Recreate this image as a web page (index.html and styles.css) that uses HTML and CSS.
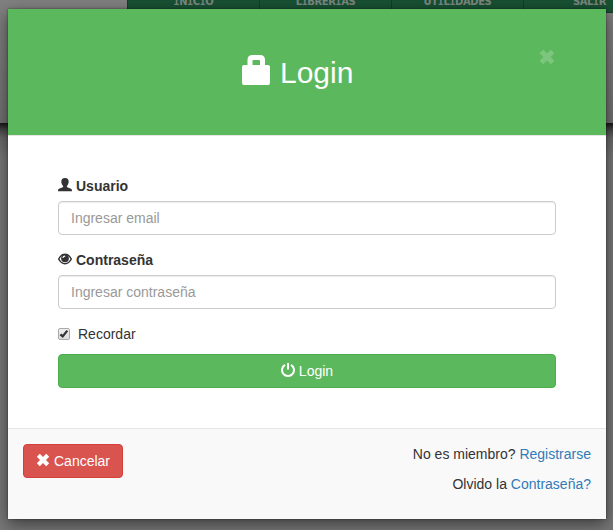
FILE: index.html
```html
<!DOCTYPE html>
<html lang="es">
<head>
<meta charset="utf-8">
<title>Login</title>
<link rel="stylesheet" href="styles.css">
</head>
<body>
<div class="page">
  <div class="banner">
    <nav class="menu">
      <a><span><b>I</b>N<b>I</b>C<b>I</b>O</span></a>
      <a><span>L<b>I</b>BRER<b>I</b>AS</span></a>
      <a><span>UT<b>I</b>L<b>I</b>DADES</span></a>
      <a><span>SAL<b>I</b>R</span></a>
    </nav>
  </div>
  <div class="content"></div>
</div>
<div class="modal">
  <header class="modal-header">
    <h4><svg class="lock" viewBox="0 0 28 30"><path fill="currentColor" fill-rule="evenodd" d="M5.500 10V5Q5.500 0 10.500 0H18Q23 0 23 5V10H26Q28 10 28 12V28Q28 30 26 30H2Q0 30 0 28V12Q0 10 2 10ZM10.500 10H18V6Q18 5 17 5H11.500Q10.500 5 10.500 6Z"/></svg>Login</h4>
    <button class="close" aria-label="Cerrar"><svg viewBox="0 0 16 16"><path fill="none" stroke="currentColor" stroke-width="5" stroke-linejoin="round" d="M2.400 2.400L13.600 13.600M13.600 2.400L2.400 13.600"/></svg></button>
  </header>
  <form class="modal-body">
    <label class="field-label" for="user"><svg class="icon" viewBox="0 0 14 14"><path fill="currentColor" d="M7 0C9.500 0 10.800 1.500 10.700 3.700C10.600 5.600 9.800 7 8.900 7.900V9C9.800 9.800 12.500 10.200 13.400 11Q14 11.600 14 13.300H0Q0 11.600.6 11C1.500 10.200 4.200 9.800 5.100 9V7.900C4.200 7 3.400 5.600 3.300 3.700C3.200 1.500 4.500 0 7 0Z"/></svg>Usuario</label>
    <input class="field" id="user" type="text" placeholder="Ingresar email">
    <label class="field-label" for="pass"><svg class="icon" viewBox="0 0 14 14"><path fill="none" stroke="currentColor" stroke-width="1.500" d="M.7 7Q3 2.300 7 2.300T13.300 7Q11 11.700 7 11.700T.7 7Z"/><path fill="currentColor" fill-rule="evenodd" d="M7 2.400A3.900 3.900 0 1 1 7 10.200A3.900 3.900 0 1 1 7 2.400ZM7.200 3.600Q4.800 3.400 4.300 5.900L5.400 6.100Q5.700 4.700 7.200 4.700Z"/></svg>Contraseña</label>
    <input class="field" id="pass" type="text" placeholder="Ingresar contraseña">
    <label class="remember"><span class="check"><svg viewBox="0 0 10 10"><path fill="none" stroke="#333" stroke-width="2.300" d="M1.400 5.300L3.700 7.400L8.300 1.600"/></svg></span>Recordar</label>
    <button class="submit" type="button"><svg class="icon power" viewBox="0 0 14 14"><path fill="none" stroke="currentColor" stroke-width="2" d="M4 1.800A6 6 0 1 0 10 1.800M7 0V6.500"/></svg>Login</button>
  </form>
  <footer class="modal-footer">
    <button class="cancel"><svg class="icon cross" viewBox="0 0 14 14"><path fill="none" stroke="currentColor" stroke-width="4.200" d="M2.300 2.300L11.700 11.700M11.700 2.300L2.300 11.700"/></svg>Cancelar</button>
    <div class="links">
      <p>No es miembro? <a>Registrarse</a></p>
      <p>Olvido la <a>Contraseña?</a></p>
    </div>
  </footer>
</div>
</body>
</html>
```
FILE: styles.css
```css
* { box-sizing: border-box; }
body {
  margin: 0;
  width: 613px;
  height: 530px;
  overflow: hidden;
  position: relative;
  font: 14px/20px "Liberation Sans", Arial, sans-serif;
  color: #333;
}
button { font: inherit; }
.page { height: 530px; background: #737373; }
.banner { height: 123px; background: linear-gradient(#808080, #707070); }
.content { height: 407px; background: linear-gradient(#161616, #484848 7px, #686868 15px, #777 35px, #777); }
.menu {
  display: flex;
  height: 13px;
  margin-left: 127px;
  overflow: hidden;
  background: #185032;
  border-bottom: 1px solid #113d25;
}
.menu a {
  flex: 0 0 132px;
  display: flex;
  justify-content: center;
  border-left: 1px solid #103e25;
  color: #7d8781;
  font: bold 10px/12px "DejaVu Sans", sans-serif;
}
.menu a span { margin-top: -4px; letter-spacing: -0.4px; }
.menu b { font-family: "DejaVu Sans Mono", monospace; }
.modal {
  position: absolute;
  left: 8px;
  top: 9px;
  width: 598px;
  height: 510px;
  display: flex;
  flex-direction: column;
  background: #fff;
  box-shadow: 0 5px 15px rgba(0, 0, 0, .5), 0 0 2px rgba(0, 0, 0, .45);
}
.modal-header {
  position: relative;
  height: 127px;
  padding: 46px 0 0 234px;
  background: #5cb85c;
  border-bottom: 1px solid #e5e5e5;
  color: #fff;
}
.modal-header h4 {
  display: flex;
  margin: 0;
  font-size: 30px;
  font-weight: 400;
  line-height: 36px;
}
.lock { width: 28px; height: 30px; margin-right: 10px; }
.close {
  position: absolute;
  left: 531px;
  top: 40px;
  padding: 0;
  border: 0;
  background: none;
  color: #fff;
  opacity: .2;
}
.close svg { display: block; width: 16px; height: 16px; }
.modal-body { height: 292px; padding: 40px 50px 0; }
.field-label { display: flex; height: 20px; margin-bottom: 5px; font-weight: 700; }
.icon { width: 14px; height: 14px; margin: 2px 4px 0 0; }
.field {
  display: block;
  width: 100%;
  height: 34px;
  margin-bottom: 15px;
  padding: 6px 12px;
  border: 1px solid #ccc;
  border-radius: 4px;
  box-shadow: inset 0 1px 1px rgba(0, 0, 0, .075);
  font: inherit;
}
.field::placeholder { color: #999; }
.remember { display: flex; align-items: center; height: 20px; margin-bottom: 10px; }
.check {
  width: 12px;
  height: 12px;
  margin-right: 8px;
  border: 1px solid #aaa;
  border-radius: 2px;
  background: linear-gradient(#eee, #ddd);
}
.check svg { display: block; width: 10px; height: 10px; }
.submit, .cancel {
  display: flex;
  justify-content: center;
  height: 34px;
  padding: 6px 12px;
  border-radius: 4px;
  color: #fff;
}
.submit { width: 100%; background: #5cb85c; border: 1px solid #4cae4c; }
.cancel { background: #d9534f; border: 1px solid #d43f3a; }
.modal-footer {
  display: flex;
  justify-content: space-between;
  height: 91px;
  padding: 15px;
  background: #f9f9f9;
  border-top: 1px solid #e5e5e5;
}
.links { text-align: right; }
.links p { margin: 0 0 10px; }
.links a { color: #337ab7; }
```
